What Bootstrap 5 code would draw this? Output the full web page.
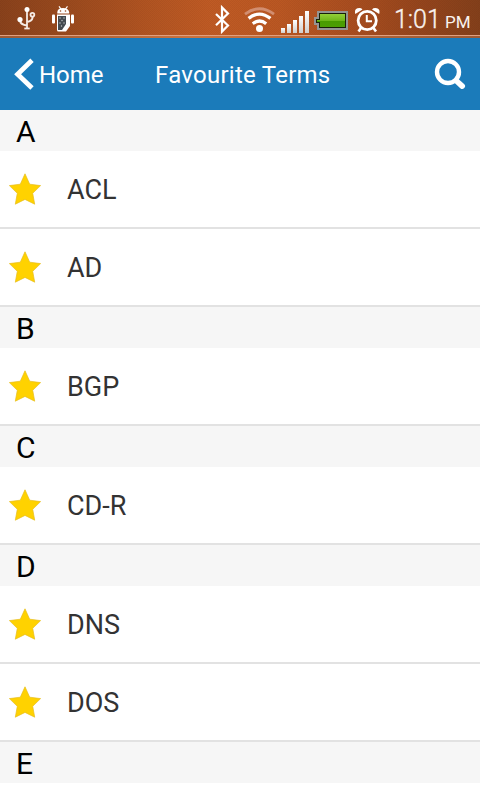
<!DOCTYPE html>
<html lang="en">
<head>
<meta charset="utf-8">
<meta name="viewport" content="width=device-width, initial-scale=1">
<title>Favourite Terms</title>
<link href="https://cdn.jsdelivr.net/npm/bootstrap@5.3.0/dist/css/bootstrap.min.css" rel="stylesheet">
<style>
body{font-family:Roboto,"Liberation Sans",sans-serif;width:480px;height:800px;overflow:hidden;background:#fff}
svg{display:block;flex:none}
.statusbar{height:38px;background:
 linear-gradient(#e0a080,#e0a080) 0 35px/100% 1px no-repeat,
 linear-gradient(90deg,#9c5a35,#c9733f 40%,#9c5a35) 0 36px/100% 2px no-repeat,
 repeating-conic-gradient(rgba(70,20,0,.07) 0 25%,transparent 0 50%) 0 0/2px 2px,
 linear-gradient(90deg,#89421c 0,#9a4a1e 14%,#b25522 31%,#c05b25 44%,#bb5823 58%,#ab4f20 72%,#97461d 86%,#83401b 100%)}
.clock{font-size:25px;line-height:38px;color:#f9f2ee;font-weight:300;-webkit-text-stroke:.35px #f9f2ee;width:47px;padding-top:1px;margin-left:-1px}
.ampm{font-size:17px;line-height:38px;padding-top:3px;color:#f9f2ee;width:25px;margin-left:4px}
.titlebar{height:72px;background:#1b7bba}
.titlebar span{font-size:24px;line-height:36px;color:#fff;padding-top:2px}
.back{width:139px}
.screen-title{letter-spacing:.26px}
.search{margin-right:14px}
.section-head{height:41px;padding-left:16px;background:#f6f6f6;color:#000;font-size:30px;line-height:43px}
.term{height:78px;border-bottom:2px solid #e2e2e2;padding-left:9px;color:#333;font-size:27px;line-height:40px}
.term span{margin-left:26px;padding-top:2px}
</style>
</head>
<body>
<svg width="0" height="0" class="position-absolute"><defs>
<symbol id="star" viewBox="0 0 32 32"><path d="M16 .8L20.7 11.2 31.6 12.6 23.7 20.3 25.7 31.2 16 26.4 6.3 31.2 8.3 20.3.4 12.6 11.3 11.2Z" fill="#ffd200" stroke="#e6bd1c" stroke-width=".7"/></symbol>
</defs></svg>

<header class="statusbar d-flex">
<svg width="215" height="38" viewBox="0 0 215 38" fill="none" stroke="#f5ebe5">
 <g stroke-width="1.8"><path d="M27 10V28M20 20V21Q20.5 24.5 27 25.5M32.5 16.5V18Q32 21 27 22"/><path d="M24.3 28.5H29.7" stroke-width="1.8"/><circle cx="27" cy="9.5" r="2.5" fill="#fff" stroke="none"/><circle cx="20" cy="19.5" r="2.6" fill="#fff" stroke="none"/><circle cx="32.4" cy="14.8" r="1.9"/></g>
 <g fill="#fff" stroke="none"><path d="M57.3 13.5V12Q57.8 8 63 8T69.2 12V13.5ZM57 14.5H70V26L66 31.5H58.5Q57 31.5 57 30Z"/><rect x="52" y="14.5" width="3" height="9" rx="1"/><rect x="71" y="14.5" width="3" height="9" rx="1"/><path d="M59 6.3L61 9M67.5 6.3L65.5 9" stroke="#fff" stroke-width="1.2"/>
 <path d="M58 16H66V24L62 30H58Z" fill="#444b50"/><g fill="#c4c7ca"><circle cx="60" cy="18" r=".7"/><circle cx="64" cy="18" r=".7"/><circle cx="62" cy="20.5" r=".7"/><circle cx="60" cy="23" r=".7"/><circle cx="64" cy="23" r=".7"/><circle cx="61.5" cy="26" r=".7"/></g><circle cx="60.5" cy="11" r=".8" fill="#96481c"/><circle cx="65.5" cy="11" r=".8" fill="#96481c"/></g>
</svg>
<svg width="180" height="38" viewBox="215 0 180 38" fill="none">
 <defs><linearGradient id="bar" x2="0" y2="1"><stop stop-color="#fff"/><stop offset="1" stop-color="#d0cecc"/></linearGradient><linearGradient id="cell" x2="0" y2="1"><stop stop-color="#93cf38"/><stop offset=".5" stop-color="#6fb81b"/><stop offset=".55" stop-color="#489b00"/><stop offset="1" stop-color="#4d9e04"/></linearGradient></defs>
 <path d="M216 14L228 25.5 222 31.5V7.5L228 13.5 216 25.2" stroke="#fff" stroke-width="2.2"/>
 <circle cx="259.5" cy="28.5" r="3.5" fill="#fff"/>
 <path d="M252.8 23.7Q259.5 18.3 266.2 23.7M248.6 18.4Q259.5 9.8 270.4 18.4" stroke="#fff" stroke-width="3.3"/><path d="M245 14.1Q259.5 3.3 274 14.1" stroke="#d28e70" stroke-width="2.8"/>
 <g fill="url(#bar)"><rect x="281" y="28" width="4" height="5"/><rect x="287" y="24" width="4" height="9"/><rect x="293" y="20" width="4" height="13"/><rect x="299" y="16" width="4" height="17"/><rect x="305" y="11" width="4" height="22"/></g>
 <path d="M317 11H348V30H317V25H314V17H317Z" fill="#949492"/><path d="M319 13H346V28H319V23H316V19H319Z" fill="#172008"/><path d="M320 14H345V27H320V22H317V20H320Z" fill="url(#cell)"/>
 <circle cx="367.2" cy="20.5" r="9.1" stroke="#fff" stroke-width="2.8"/><path d="M366.8 15V21.2H372" stroke="#fff" stroke-width="2"/><path d="M361 28L358.5 31.5M373.5 28L376 31.5" stroke="#fff" stroke-width="2.6"/><path d="M355.3 14Q354 9.5 357.5 8.3 360.8 7.4 362.5 9.4ZM379.2 14Q380.5 9.5 377 8.3 373.7 7.4 372 9.4Z" fill="#fff"/>
</svg>
<div class="clock text-nowrap">1:01</div><div class="ampm text-nowrap">PM</div>
</header>

<nav class="titlebar d-flex align-items-center">
<div class="back d-flex align-items-center">
<svg class="ms-3" width="23" height="32" viewBox="16 58 23 32" overflow="visible"><path d="M32 60.3L17.6 74.2 32 88" fill="none" stroke="#fff" stroke-width="4.8"/></svg>
<span>Home</span></div>
<span class="screen-title text-nowrap ms-3">Favourite Terms</span>
<svg class="search ms-auto" width="32" height="32" viewBox="434 58 32 32" fill="none" stroke="#fff"><circle cx="448" cy="72" r="11" stroke-width="4.4"/><path d="M456.3 80.7L462.2 86.1" stroke-width="5.6" stroke-linecap="round"/></svg>
</nav>

<main>
<h2 class="section-head m-0 fw-normal">A</h2>
<div class="term d-flex align-items-center"><svg width="32" height="32"><use href="#star"/></svg><span>ACL</span></div>
<div class="term d-flex align-items-center"><svg width="32" height="32"><use href="#star"/></svg><span>AD</span></div>
<h2 class="section-head m-0 fw-normal">B</h2>
<div class="term d-flex align-items-center"><svg width="32" height="32"><use href="#star"/></svg><span>BGP</span></div>
<h2 class="section-head m-0 fw-normal">C</h2>
<div class="term d-flex align-items-center"><svg width="32" height="32"><use href="#star"/></svg><span>CD-R</span></div>
<h2 class="section-head m-0 fw-normal">D</h2>
<div class="term d-flex align-items-center"><svg width="32" height="32"><use href="#star"/></svg><span>DNS</span></div>
<div class="term d-flex align-items-center"><svg width="32" height="32"><use href="#star"/></svg><span>DOS</span></div>
<h2 class="section-head m-0 fw-normal">E</h2>
</main>
<script src="https://cdn.jsdelivr.net/npm/bootstrap@5.3.0/dist/js/bootstrap.bundle.min.js"></script>
</body>
</html>
